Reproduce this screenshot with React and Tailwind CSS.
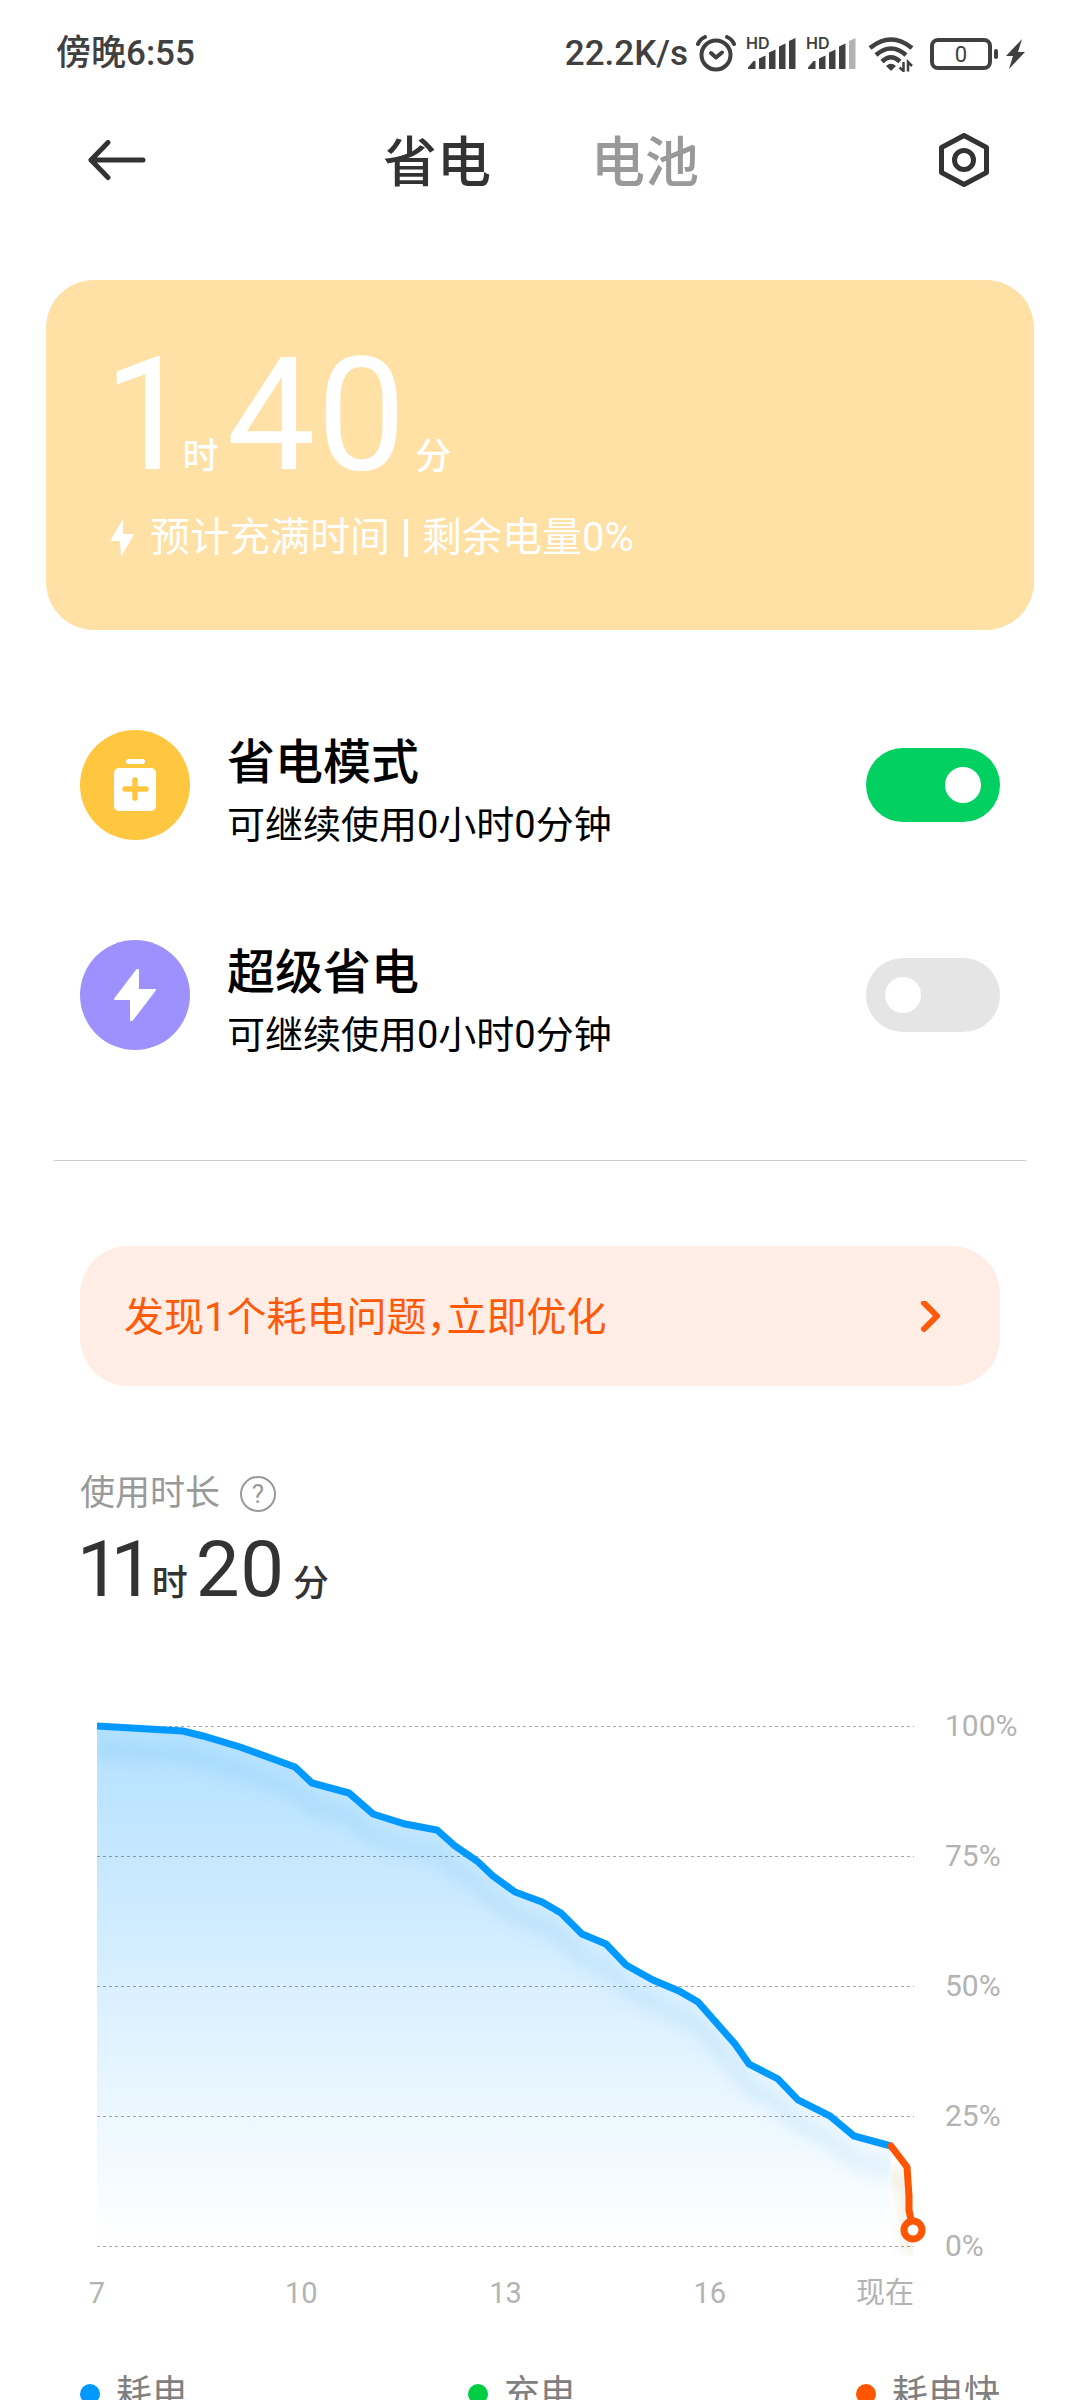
import React, { useState } from 'react';

const LEVELS = [
  [0, 0], [86, 5], [106, 10], [143, 21], [198, 41], [215, 57], [252, 67], [276, 88],
  [308, 98], [340, 104], [358, 120], [380, 135], [396, 150], [418, 166], [445, 176],
  [464, 187], [485, 208], [509, 218], [529, 239], [556, 254], [582, 265], [601, 276],
  [638, 318], [652, 338], [681, 353], [701, 374], [733, 390], [757, 410], [794, 420],
];

const FAST_DRAIN = [[794, 420], [810, 441], [812, 470], [812, 484], [816, 504]];

const toPoints = (list) => list.map((p) => p.join(',')).join(' ');

const BoltShape = ({ className }) => (
  <svg viewBox="0 0 24 38" className={className} fill="currentColor" aria-hidden="true">
    <path d="M13 0 L0 22 H10 L11 38 L24 15 H13 Z" />
  </svg>
);

const SignalIcon = ({ weak }) => (
  <svg width="50" height="36" viewBox="0 0 50 36" fill="currentColor" className="overflow-visible" aria-hidden="true">
    <text x="0" y="13" fontSize="16" fontWeight="600" fontFamily="Inter, sans-serif">HD</text>
    <path d="M2 31.5 L7.5 25 H9.5 V33 H2 Z" />
    <path d="M13 22.500 L19.500 19.500 V33 H13 Z" />
    <path d="M23 16.500 L29.500 13.500 V33 H23 Z" />
    <path d="M33 10.500 L39.500 7.500 V33 H33 Z" />
    <path d="M43 5 L49.500 2 V33 H43 Z" fill={weak ? '#b3b3b3' : 'currentColor'} />
  </svg>
);

const StatusBar = () => (
  <div className="h-[108px] pl-14 pr-[55px] flex items-center justify-between text-[#404040]">
    <span className="text-[35px] font-medium">傍晚6:55</span>
    <div className="flex items-center">
      <span className="text-[35px] font-medium mr-2">22.2K/s</span>
      <svg width="40" height="38" viewBox="0 0 40 38" fill="none" stroke="currentColor" strokeWidth="4" strokeLinecap="round" strokeLinejoin="round" className="mr-[10px]" aria-hidden="true">
        <circle cx="20" cy="20" r="14.500" />
        <path d="M15 18 L20 22.500 L26 17.500" />
        <path d="M2 9 Q4 4 9 2 M31 2 Q36 4 38 9" />
      </svg>
      <div className="mr-[10px]"><SignalIcon /></div>
      <div className="mr-3"><SignalIcon weak /></div>
      <svg width="47" height="36" viewBox="0 0 47 36" fill="none" stroke="currentColor" strokeWidth="4.500" className="mr-[15px]" aria-hidden="true">
        <path d="M2 12 Q23 -5 44 12" />
        <path d="M8 19 Q23 6 38 19" />
        <path d="M14 25.500 Q23 17 32 25.500" />
        <path d="M18 30 Q23 25.500 28 30 L23 35 Z" fill="currentColor" stroke="none" />
        <path d="M35.500 26 V35 L31.500 31.500 M40 35.500 V26 L44 30" strokeWidth="2.500" />
      </svg>
      <svg width="68" height="32" viewBox="0 0 68 32" fill="none" className="mr-2" aria-hidden="true">
        <rect x="2" y="2" width="58" height="28" rx="6" stroke="currentColor" strokeWidth="4" />
        <rect x="64" y="11" width="4" height="10" rx="2" fill="currentColor" />
        <text x="31" y="24" textAnchor="middle" fontSize="22" fontFamily="Roboto, sans-serif" fill="currentColor">0</text>
      </svg>
      <svg width="19" height="30" viewBox="0 0 19 30" fill="currentColor" aria-hidden="true">
        <path d="M16 0 L0 17 H7 L3 30 L19 13 H12 Z" />
      </svg>
    </div>
  </div>
);

const Header = ({ tab, onTab }) => (
  <header className="h-[106px] px-[88px] flex items-center justify-between text-[#333]">
    <button type="button" aria-label="返回">
      <svg width="58" height="42" viewBox="0 0 58 42" fill="none" stroke="currentColor" strokeWidth="5" strokeLinecap="round" strokeLinejoin="round">
        <path d="M55 20 H3 M20 2.500 L3 20 L20 37.500" />
      </svg>
    </button>
    <nav className="flex gap-[100px] pt-[6px] text-[54px] leading-[80px] font-medium">
      <button type="button" onClick={() => onTab('save')} className={tab === 'save' ? 'text-[#333]' : 'text-[#999]'}>省电</button>
      <button type="button" onClick={() => onTab('battery')} className={tab === 'battery' ? 'text-[#333]' : 'text-[#999]'}>电池</button>
    </nav>
    <button type="button" aria-label="设置">
      <svg width="56" height="56" viewBox="0 0 56 56" fill="none" stroke="currentColor" strokeWidth="5" strokeLinejoin="round">
        <path d="M28 2.500 L50.500 14.500 V39.500 L28 51.500 L5.500 39.500 V14.500 Z" />
        <circle cx="28" cy="27" r="9.500" />
      </svg>
    </button>
  </header>
);

const ModeRow = ({ id, icon, color, title, detail, defaultChecked }) => (
  <div className="h-[110px] flex items-center">
    <div className={`size-[110px] rounded-full flex items-center justify-center ${color}`}>{icon}</div>
    <label htmlFor={id} className="flex-1 ml-[37px] pt-3 text-black">
      <span className="block text-[48px] leading-[68px] font-medium">{title}</span>
      <span className="block text-[38px] leading-[56px]">{detail}</span>
    </label>
    <input
      id={id}
      type="checkbox"
      role="switch"
      defaultChecked={defaultChecked}
      className="appearance-none w-[134px] h-[74px] rounded-full bg-[#e5e5e5] checked:bg-[#02d061] flex items-center px-[19px] checked:justify-end before:content-[''] before:size-9 before:rounded-full before:bg-white"
    />
  </div>
);

const BatteryChart = () => (
  <div className="mt-[108px]">
    <div className="flex gap-[31px] pl-[97px] pr-[63px]">
      <svg viewBox="0 0 817 520" className="flex-1 min-w-0 overflow-visible" fill="none" role="img" aria-label="电量曲线">
        <defs>
          <linearGradient id="fill" x1="0" y1="0" x2="0" y2="1">
            <stop offset="0" stopColor="#0099ff" stopOpacity="0.3" />
            <stop offset="1" stopColor="#0099ff" stopOpacity="0" />
          </linearGradient>
          <filter id="soft" x="-10%" y="-10%" width="120%" height="130%">
            <feGaussianBlur stdDeviation="7" />
          </filter>
          <clipPath id="under">
            <polygon points={`${toPoints(LEVELS)} 794,520 0,520`} />
          </clipPath>
          <clipPath id="under-fast">
            <polygon points={`${toPoints(FAST_DRAIN)} 816,530 794,530`} />
          </clipPath>
        </defs>
        <polygon points={`${toPoints(LEVELS)} 794,520 0,520`} fill="url(#fill)" />
        <g clipPath="url(#under)">
          <polyline points={toPoints(LEVELS)} stroke="#0088dd" strokeOpacity="0.08" strokeWidth="18" filter="url(#soft)" transform="translate(0 24)" />
        </g>
        <g clipPath="url(#under-fast)">
          <polyline points={toPoints(FAST_DRAIN)} stroke="#887722" strokeOpacity="0.12" strokeWidth="16" filter="url(#soft)" transform="translate(0 24)" />
        </g>
        {[0, 130, 260, 390, 520].map((y) => (
          <line key={y} x1="0" x2="817" y1={y} y2={y} stroke="#000" strokeOpacity="0.35" strokeDasharray="3 3" shapeRendering="crispEdges" />
        ))}
        <polyline points={toPoints(LEVELS)} stroke="#0099ff" strokeWidth="7" />
        <polyline points={toPoints(FAST_DRAIN)} stroke="#ff5500" strokeWidth="7" strokeLinecap="round" strokeLinejoin="round" />
        <circle cx="816" cy="504" r="9" fill="#fff" stroke="#ff5500" strokeWidth="7" />
      </svg>
      <div className="w-[72px] -mt-4 -mb-4 flex flex-col justify-between text-[30px] leading-[32px] text-[#b3b3b3]">
        {['100%', '75%', '50%', '25%', '0%'].map((label) => <span key={label}>{label}</span>)}
      </div>
    </div>
    <div className="mt-[27px] pl-[97px] pr-[166px] grid grid-cols-4 text-[29px] leading-10 text-[#b3b3b3]">
      {['7', '10', '13'].map((hour) => (
        <span key={hour} className="w-0 flex justify-center">{hour}</span>
      ))}
      <span className="flex justify-between">
        <span className="w-0 flex justify-center">16</span>
        <span>现在</span>
      </span>
    </div>
  </div>
);

const LEGEND = [
  { label: '耗电', dot: 'bg-[#0099ff]' },
  { label: '充电', dot: 'bg-[#00cc44]' },
  { label: '耗电快', dot: 'bg-[#ff5500]' },
];

const App = () => {
  const [tab, setTab] = useState('save');

  return (
    <div className="h-screen overflow-hidden bg-white font-[Roboto,'Noto_Sans_CJK_SC',sans-serif]">
      <StatusBar />
      <Header tab={tab} onTab={setTab} />

      <section className="mx-[46px] mt-[66px] h-[350px] px-16 pt-[70px] rounded-[48px] bg-[#ffe0a5] text-white">
        <p className="flex items-baseline text-[158px] leading-[130px] proportional-nums">
          <span>1</span>
          <span className="ml-1 text-[36px] leading-none font-medium">时</span>
          <span className="ml-2">40</span>
          <span className="ml-2 text-[36px] leading-none font-medium">分</span>
        </p>
        <p className="mt-[30px] flex items-center text-[40px] leading-[56px]">
          <BoltShape className="w-6 h-[38px] mr-4" />
          预计充满时间
          <span className="w-1 h-[38px] mx-[14px] bg-white" />
          剩余电量0%
        </p>
      </section>

      <section className="mt-[100px] px-20 flex flex-col gap-[100px]">
        <ModeRow
          id="power-save"
          color="bg-[#ffc640]"
          title="省电模式"
          detail="可继续使用0小时0分钟"
          defaultChecked
          icon={(
            <svg width="42" height="52" viewBox="0 0 42 52" aria-hidden="true">
              <rect x="12" y="0" width="19" height="5" rx="2.500" fill="#fff" />
              <rect x="0" y="9" width="42" height="43" rx="5" fill="#fff" />
              <path d="M21 21 V39 M11 30 H32" stroke="#ffc640" strokeWidth="5.500" strokeLinecap="round" />
            </svg>
          )}
        />
        <ModeRow
          id="ultra-save"
          color="bg-[#9e91fe]"
          title="超级省电"
          detail="可继续使用0小时0分钟"
          icon={(
            <svg width="44" height="54" viewBox="0 0 44 54" aria-hidden="true">
              <path d="M25 2 V22 H42 L19 52 H18 V31 H2 L24 2 Z" fill="#fff" stroke="#fff" strokeWidth="2" strokeLinejoin="round" />
            </svg>
          )}
        />
      </section>

      <hr className="mx-[54px] mt-[110px] border-[#ccc]" />

      <div className="mt-[85px] px-20">
        <button type="button" className="w-full h-[140px] px-11 pt-1 rounded-[48px] bg-[#ffede6] text-[#ff5a0a] text-[40px] flex items-center justify-between">
          <span className="[font-feature-settings:'halt']">发现1个耗电问题，立即优化</span>
          <svg width="52" height="34" viewBox="0 0 52 34" fill="none" stroke="currentColor" strokeWidth="6" strokeLinecap="round" strokeLinejoin="round" aria-hidden="true">
            <path d="M20 2 L33 15 L20 28" />
          </svg>
        </button>
      </div>

      <section className="mt-[84px] px-20">
        <div className="flex items-center text-[#999] text-[35px] leading-[48px]">
          使用时长
          <button type="button" aria-label="说明" className="ml-5 size-9 rounded-full border-2 border-[#999] text-[26px] leading-none flex items-center justify-center">?</button>
        </div>
        <p className="mt-1 flex items-baseline text-[78px] leading-[96px] text-[#333] proportional-nums">
          <span>11</span>
          <span className="ml-1 text-[36px] leading-none font-medium">时</span>
          <span className="ml-2">20</span>
          <span className="ml-2 text-[36px] leading-none font-medium">分</span>
        </p>
      </section>

      <BatteryChart />

      <ul className="mt-[57px] px-20 flex justify-between text-[36px] leading-[48px] text-[#808080]">
        {LEGEND.map(({ label, dot }) => (
          <li key={label} className="flex items-center gap-4">
            <span className={`size-5 rounded-full ${dot}`} />
            {label}
          </li>
        ))}
      </ul>
    </div>
  );
};

export default App;
